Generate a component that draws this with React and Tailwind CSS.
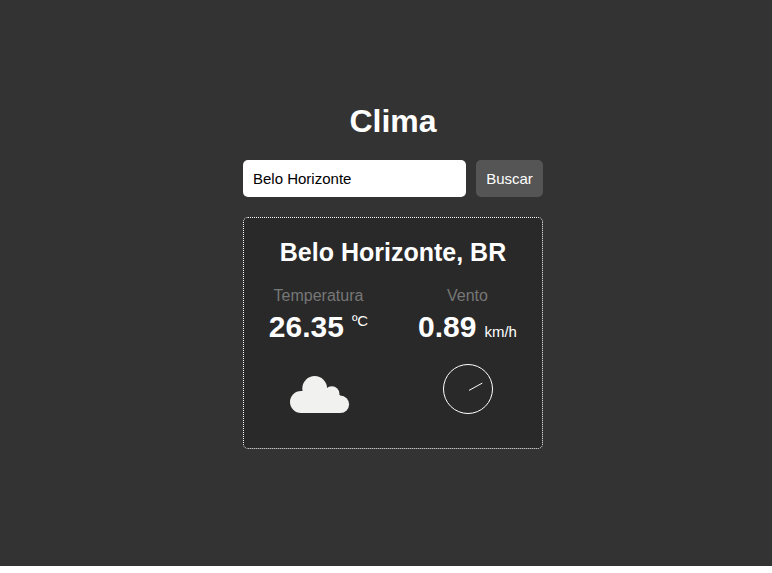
function Metric({ label, children }) {
  return (
    <div className="flex flex-col items-center">
      <p className="text-base leading-[18px] text-[#777777]">{label}</p>
      {children}
    </div>
  );
}

function Cloud() {
  return (
    <svg className="mt-[31px] ml-[3px] h-[38px] w-[60px]" viewBox="0 0 60 38" fill="#f1f1f0">
      <circle cx="11" cy="26" r="11" />
      <circle cx="24.7" cy="12.5" r="12.4" />
      <circle cx="41.8" cy="18" r="7.7" />
      <circle cx="50.4" cy="28.3" r="8.7" />
      <path d="M11 15H25L42 19H50V37H11Z" />
    </svg>
  );
}

function WindDial() {
  return (
    <svg className="mt-[19px] h-[50px] w-[50px]" viewBox="0 0 50 50" fill="none" stroke="#fff">
      <circle cx="25" cy="25" r="24.5" />
      <path d="M26 26.4L39.3 19.1" />
    </svg>
  );
}

export default function App() {
  return (
    <div className="h-[573px] overflow-hidden bg-white font-['Liberation_Sans',Arial,sans-serif] text-white">
      <main className="h-[566px] bg-[#333333] pt-[103px] pl-[243px]">
        <div className="w-[300px]">
          <h1 className="text-center text-[32px] leading-[37px] font-bold">Clima</h1>
          <form className="mt-5 flex gap-[10px]" onSubmit={(e) => e.preventDefault()}>
            <input
              className="h-[37px] w-[223px] rounded-[5px] bg-white px-[10px] text-[15px] text-black outline-none"
              defaultValue="Belo Horizonte"
            />
            <button className="h-[37px] w-[67px] rounded-[5px] bg-[#555555] pt-[2px] text-center text-[15px]">Buscar</button>
          </form>
          <section className="mt-5 h-[232px] rounded-[5px] border border-dotted border-white bg-[#292929] pt-5">
            <h2 className="text-center text-[25px] leading-[29px] font-bold">Belo Horizonte, BR</h2>
            <div className="mt-5 grid grid-cols-2">
              <Metric label="Temperatura">
                <p className="flex h-[40px] gap-2 text-[30px] leading-[44px] font-bold">
                  26.35 <sup className="top-0 text-[15px] leading-[32px] font-normal">ºC</sup>
                </p>
                <Cloud />
              </Metric>
              <Metric label="Vento">
                <p className="flex h-[40px] items-baseline gap-2 text-[30px] leading-[44px] font-bold">
                  0.89 <span className="text-[15px] font-normal">km/h</span>
                </p>
                <WindDial />
              </Metric>
            </div>
          </section>
        </div>
      </main>
    </div>
  );
}
